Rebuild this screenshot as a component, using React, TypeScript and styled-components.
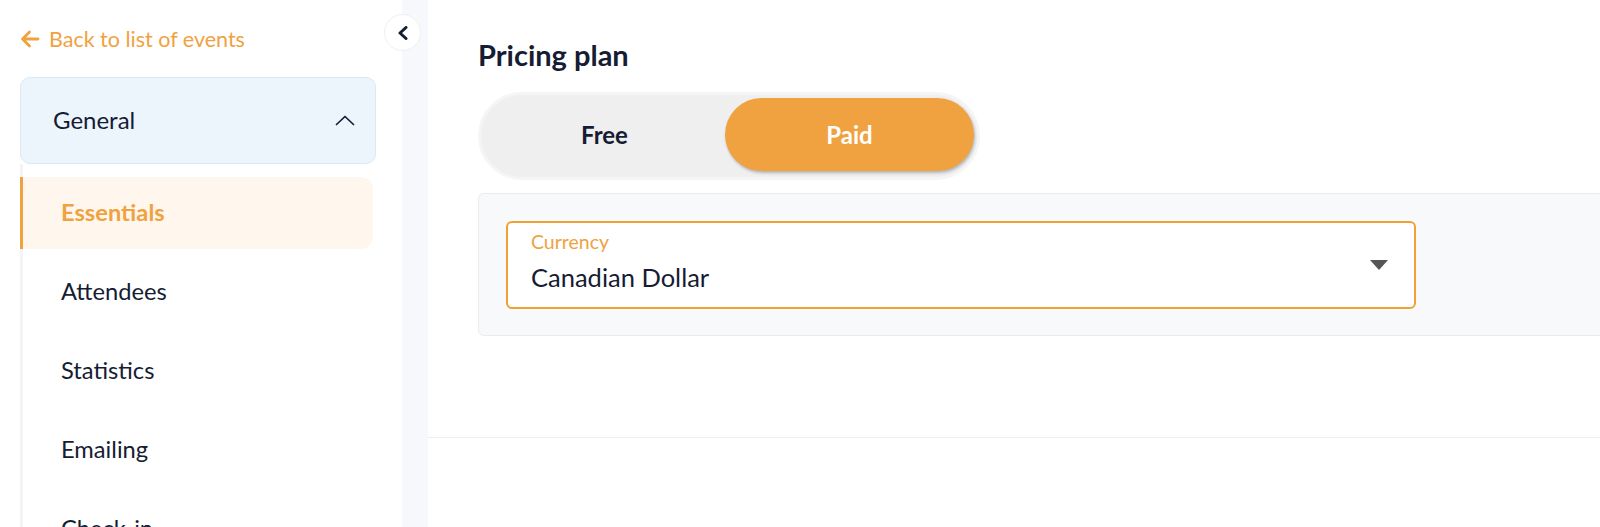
import React from 'react';
import styled, { createGlobalStyle } from 'styled-components';

const GlobalStyle = createGlobalStyle`
  html, body {
    margin: 0;
    padding: 0;
    background: #ffffff;
    font-family: Lato, 'Noto Sans', sans-serif;
    color: #151c33;
  }
  * {
    box-sizing: border-box;
  }
`;

const ORANGE = '#f0a23f';
const NAVY = '#151c33';

const Page = styled.div`
  display: flex;
  width: 100%;
  height: 527px;
  overflow: hidden;
`;

const Sidebar = styled.aside`
  position: relative;
  flex: 0 0 402px;
  padding: 27px 26px 0 20px;
  background: #ffffff;
`;

const CollapseButton = styled.button`
  position: absolute;
  top: 14px;
  right: -19px;
  width: 37px;
  height: 37px;
  padding: 0;
  display: flex;
  align-items: center;
  justify-content: center;
  border-radius: 50%;
  border: 1px solid #eef0f3;
  background: #ffffff;
  z-index: 2;
`;

const BackLink = styled.a`
  display: flex;
  align-items: center;
  gap: 9px;
  height: 24px;
  font-size: 21.5px;
  color: ${ORANGE};
  text-decoration: none;
`;

const GroupHeader = styled.div`
  display: flex;
  align-items: center;
  justify-content: space-between;
  height: 87px;
  margin-top: 26px;
  padding: 0 20px 3px 32px;
  background: #edf5fc;
  border: 1px solid #d9eaf6;
  border-radius: 10px;
  font-size: 24px;
  color: ${NAVY};

  svg {
    margin-top: 3px;
  }
`;

const SubMenu = styled.div`
  padding-top: 13px;
  margin-right: 3px;
  border-left: 3px solid #f3f4f6;
`;

interface MenuItemProps {
  $active?: boolean;
}

const MenuItem = styled.div<MenuItemProps>`
  display: flex;
  align-items: center;
  height: 72px;
  margin: 0 0 7px -3px;
  padding: 0 0 3px 38px;
  border-left: 3px solid ${(p) => (p.$active ? ORANGE : 'transparent')};
  border-radius: 0 12px 12px 0;
  background: ${(p) => (p.$active ? '#fff6ee' : 'transparent')};
  color: ${(p) => (p.$active ? ORANGE : NAVY)};
  font-size: 23.7px;
  font-weight: ${(p) => (p.$active ? 700 : 400)};
`;

const Main = styled.main`
  flex: 1;
  display: flex;
  flex-direction: column;
  padding-left: 26px;
  background: #f6f8fb;
  min-width: 0;
`;

const Panel = styled.section`
  height: 438px;
  padding: 38px 0 0 50px;
  background: #ffffff;
  border-bottom: 1px solid #eceef1;
  overflow: hidden;
`;

const NextPanel = styled.section`
  flex: 1;
  background: #ffffff;
`;

const Title = styled.h2`
  margin: 0;
  font-size: 29px;
  line-height: 34px;
  font-weight: 700;
  color: ${NAVY};
`;

const Toggle = styled.div`
  display: flex;
  width: 502px;
  height: 88px;
  margin-top: 20px;
  padding: 3px;
  border: 3px solid #f5f5f5;
  border-radius: 44px;
  background: #efefef;
`;

interface OptionProps {
  $selected?: boolean;
}

const Option = styled.div<OptionProps>`
  flex: ${(p) => (p.$selected ? '0 0 249px' : '1')};
  display: flex;
  align-items: center;
  justify-content: center;
  height: 73px;
  border-radius: 37px;
  font-size: 24px;
  font-weight: 700;
  background: ${(p) => (p.$selected ? '#f0a241' : 'transparent')};
  color: ${(p) => (p.$selected ? '#ffffff' : NAVY)};
  box-shadow: ${(p) => (p.$selected ? '1px 2px 3px rgba(0, 0, 0, 0.25)' : 'none')};
`;

const Card = styled.div`
  margin: 13px -10px 0 0;
  padding: 27px 27px 26px;
  background: #f8f9fb;
  border: 1px solid #e8ebef;
  border-radius: 6px;
`;

const Select = styled.div`
  position: relative;
  display: flex;
  flex-direction: column;
  width: 910px;
  height: 88px;
  padding: 8px 26px 0 23px;
  background: #ffffff;
  border: 2px solid #f2a033;
  border-radius: 6px;
`;

const SelectLabel = styled.span`
  font-size: 19.5px;
  line-height: 22px;
  color: ${ORANGE};
`;

const SelectValue = styled.span`
  margin-top: 9px;
  font-size: 25.5px;
  line-height: 30px;
  color: ${NAVY};
`;

const Arrow = styled.svg`
  position: absolute;
  right: 26px;
  top: 37px;
`;

const items = ['Essentials', 'Attendees', 'Statistics', 'Emailing', 'Check-in'];

const App = () => {
  return (
    <>
      <GlobalStyle />
      <Page>
        <Sidebar>
          <CollapseButton>
            <svg width="12" height="14" viewBox="0 0 12 14">
              <polyline
                points="9,1.5 3,7 9,12.5"
                fill="none"
                stroke={NAVY}
                strokeWidth="3"
                strokeLinecap="round"
                strokeLinejoin="round"
              />
            </svg>
          </CollapseButton>
          <BackLink href="#">
            <svg width="20" height="18" viewBox="0 0 20 18">
              <path
                d="M18 9H2.5M9.5 2L2.5 9l7 7"
                fill="none"
                stroke={ORANGE}
                strokeWidth="2.8"
                strokeLinecap="round"
                strokeLinejoin="round"
              />
            </svg>
            Back to list of events
          </BackLink>
          <GroupHeader>
            General
            <svg width="20" height="11" viewBox="0 0 20 11">
              <polyline
                points="1.5,9.5 10,1.5 18.5,9.5"
                fill="none"
                stroke={NAVY}
                strokeWidth="1.7"
                strokeLinecap="round"
                strokeLinejoin="round"
              />
            </svg>
          </GroupHeader>
          <SubMenu>
            {items.map((item, i) => (
              <MenuItem key={item} $active={i === 0}>
                {item}
              </MenuItem>
            ))}
          </SubMenu>
        </Sidebar>
        <Main>
          <Panel>
            <Title>Pricing plan</Title>
            <Toggle>
              <Option>Free</Option>
              <Option $selected>Paid</Option>
            </Toggle>
            <Card>
              <Select>
                <SelectLabel>Currency</SelectLabel>
                <SelectValue>Canadian Dollar</SelectValue>
                <Arrow width="18" height="10" viewBox="0 0 18 10">
                  <path d="M0 0h18L9 10z" fill="#555555" />
                </Arrow>
              </Select>
            </Card>
          </Panel>
          <NextPanel />
        </Main>
      </Page>
    </>
  );
};

export default App;
